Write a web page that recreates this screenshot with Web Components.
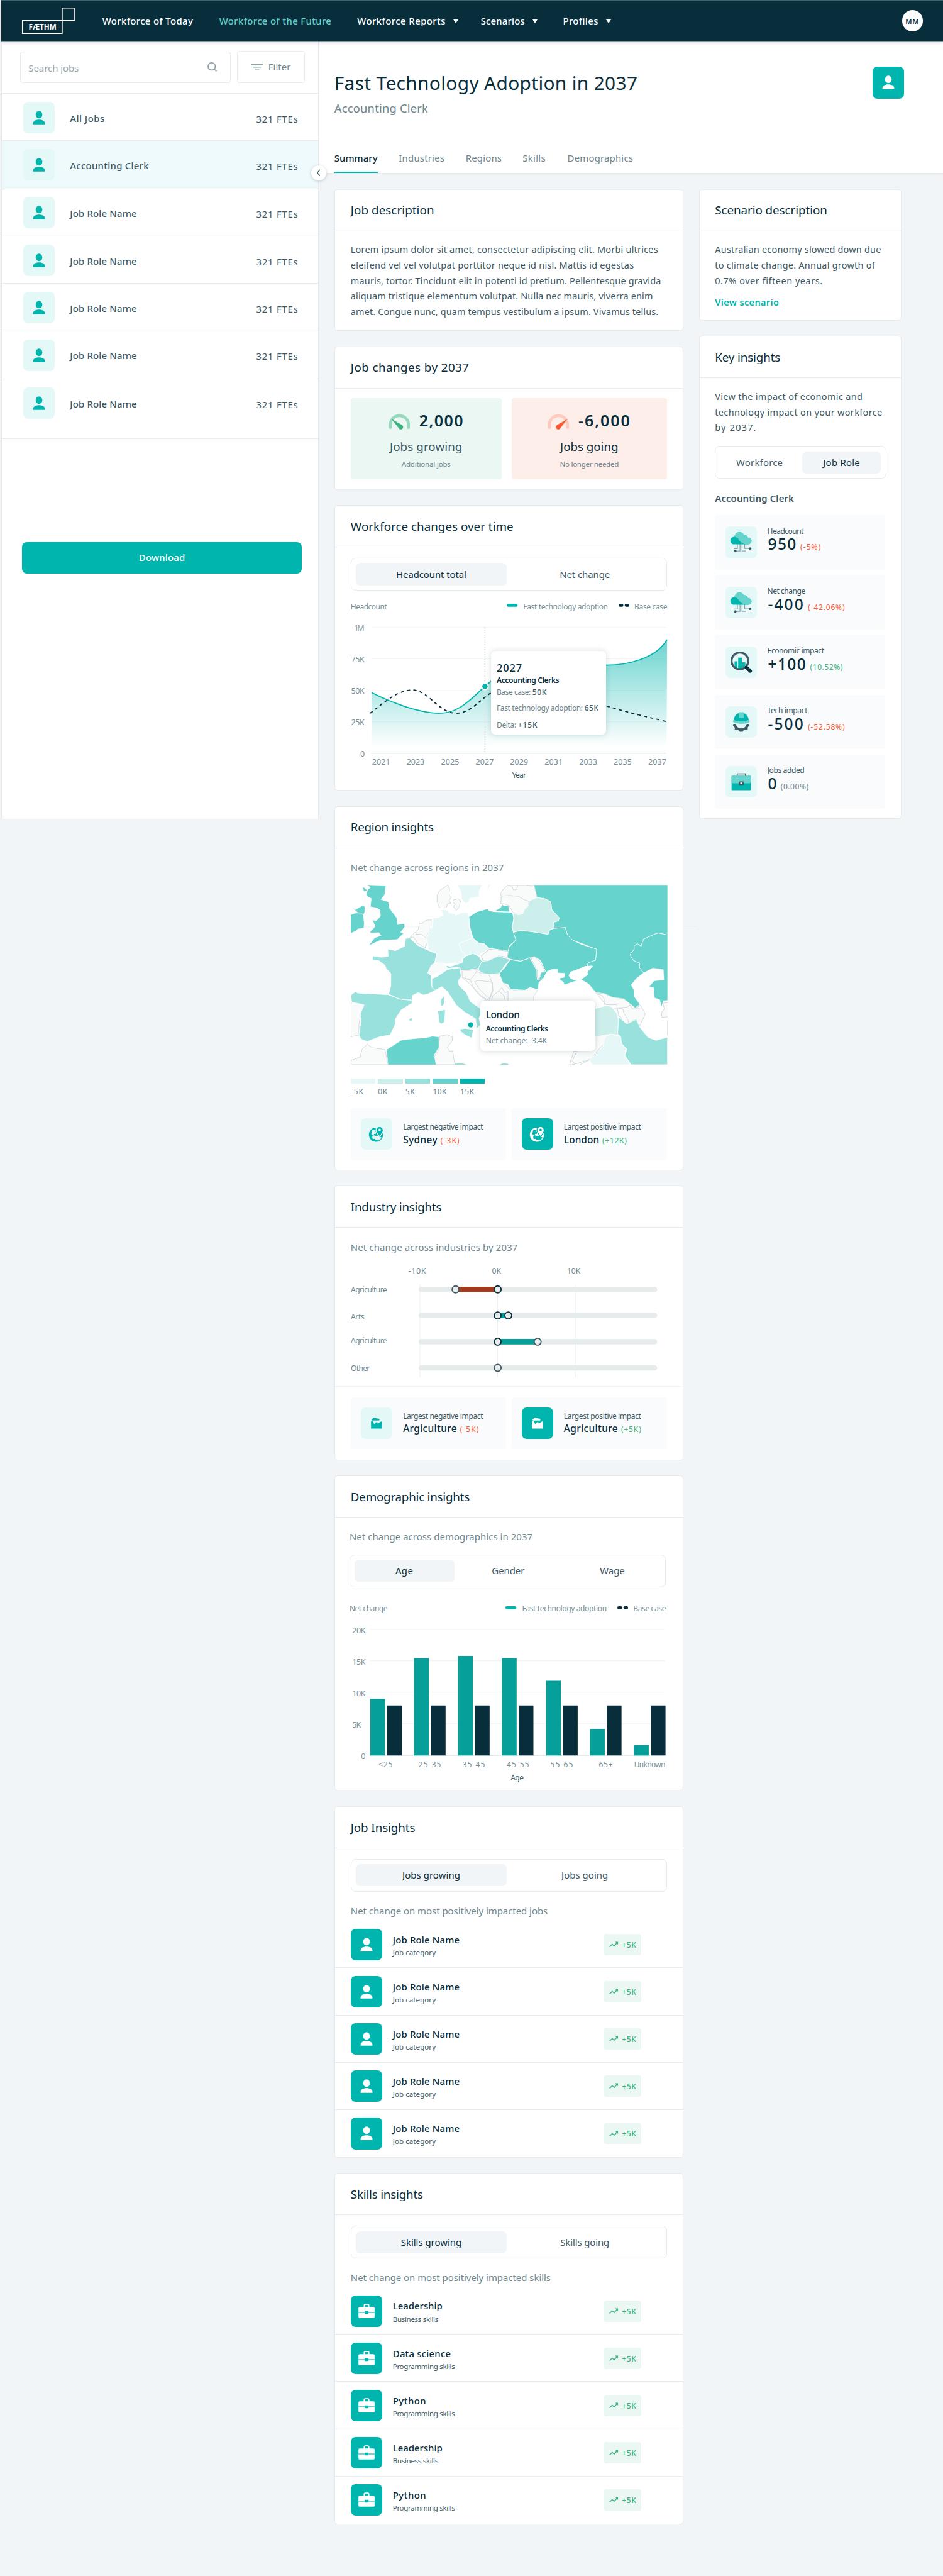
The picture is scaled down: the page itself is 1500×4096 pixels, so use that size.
<!DOCTYPE html>
<html lang="en">
<head>
<meta charset="utf-8">
<title>Workforce of the Future</title>
<style>
html{background:#f1f5f8;overflow:hidden}
body{margin:0;font-family:"Noto Sans",sans-serif;color:#082d3b}
</style>
</head>
<body>
<workforce-app></workforce-app>
<script>
const INK='#082d3b', BODY='#3c5863', MUTED='#6e868d', TEAL='#00b5ad', LINE='#e6ebec', GREEN='#3bb381', RED='#ff5b36';
const FACE='"Noto Sans"';
const pen=document.createElement('canvas').getContext('2d');

class Base extends HTMLElement{
  connectedCallback(){
    if(this.shadowRoot)return;
    this.attachShadow({mode:'open'}).innerHTML='<style>:host{display:block;box-sizing:border-box}*{box-sizing:border-box}svg{display:block}'+this.css()+'</style>'+this.html();
  }
  css(){return ''}
  html(){return '<slot></slot>'}
  a(n,d=''){return this.getAttribute(n)??d}
}
const def=(n,c)=>customElements.define(n,c);

/* A single line of text tracked to a given measure. */
class TextLine extends Base{
  css(){
    const s=+this.a('s',16),wt=this.a('wt','400'),w=+this.a('w',0),t=this.textContent.trim();
    pen.font=`${wt} ${s}px ${FACE}`;
    const m=pen.measureText(t).width;
    const ls=w?(w+1-m)/t.length:0;
    return `:host{white-space:nowrap;flex:none;font-size:${s}px;font-weight:${wt};color:${this.a('c',INK)};line-height:${this.a('lh',24)}px;letter-spacing:${ls.toFixed(3)}px;${w?`width:${w+1}px`:''}}`;
  }
}
def('text-line',TextLine);
const T=(t,w,s=16,c=INK,o={})=>`<text-line w="${w}" s="${s}" c="${c}" wt="${o.wt||400}" lh="${o.lh||24}" style="${o.st||''}">${t}</text-line>`;
const ST=(t,x,y,w,c=MUTED,s=12.5,wt=400)=>`<text x="${x}" y="${y}" textLength="${w}" fill="${c}" font-size="${s}" font-weight="${wt}">${t}</text>`;

const ICONS={
 person:f=>`<ellipse cx="26" cy="21" rx="5.5" ry="6.2" fill="${f}"/><path d="M16.2 37v-1.4c0-4 4-6.3 9.8-6.3s9.8 2.3 9.8 6.3V37z" fill="${f}"/>`,
 case:(f,b)=>`<path d="M22.3 19.5v-3.2c0-1 .6-1.6 1.6-1.6h4.2c1 0 1.6.6 1.6 1.6v3.2" fill="none" stroke="${f}" stroke-width="2"/><rect x="12.7" y="19" width="26.6" height="18.2" rx="2" fill="${f}"/><path d="M12.7 28h26.6" stroke="${b}" stroke-width="1.2"/><rect x="22.8" y="25.6" width="6.4" height="4.8" rx=".8" fill="${b}"/>`,
 globe:(f,b)=>`<circle cx="25" cy="27.3" r="11.7" fill="${f}"/><path d="M18.300 20.300l2.500-1.300 3.200.6-.4 2.300 1.800 1.300-.6 2.400-3 .4-.6 2.200 3.600.9 3.800-.2 2.200 2.100 3 .2-1.600 4.400-3.600 1.300-2.200-1.500-1.800.8-1.400-2.200-3.600.6-.8-3.600.9-2.600-2.600-2.400.9-2.500z" fill="${b}"/><path d="M31 30.300c-4-4.700-6-7.500-6-10.500a6 6 0 0 1 12 0c0 3-1.800 5.800-6 10.500z" fill="${f}" stroke="${b}" stroke-width="1.400"/><circle cx="31" cy="19.300" r="2.100" fill="${b}"/>`,
 factory:f=>`<path d="M16.800 22.700h3.200l1.900 4.900 5.200-4.400v3.400l7.700-4v12.200h-18z" fill="${f}"/><path d="M18.300 21.500c-1.200-1.500-.2-3.200 1.300-3.200.8-1.600 3-1.900 4.300-.7 1.200-.3 1.900 0 2.600.8 1.500-.6 3.500-.1 4.200 1.200.3 1-.3 1.900-1.400 1.900z" fill="${f}"/>`,
 cloud:()=>`<path d="M19.700 29v7.600h-8M24 29v11.500h-8M27.400 29v11.500h8M31.700 29v7.500h8" fill="none" stroke="#8ba2a8" stroke-width="1.300"/><circle cx="11.500" cy="36.500" r="2" fill="#fff"/><circle cx="35.500" cy="40.600" r="2" fill="#fff"/><circle cx="16.200" cy="40.700" r="2" fill="${BODY}"/><circle cx="40.700" cy="36.500" r="2" fill="${BODY}"/><path d="M14 29.500c-3.500 0-6-2.800-6-6 0-3.600 3-6.400 6.700-6C15.500 12.300 19 9.300 23 9.300c3.400 0 6 1.800 7.300 4.700 3.500-.5 5.900 1.300 6.600 4.300 3.500.1 6.100 2.500 6.100 5.500 0 3.300-2.500 5.700-6 5.700z" fill="${TEAL}"/><path d="M14.700 17.500C15.500 12.300 19 9.300 23 9.300c3.400 0 6 1.800 7.300 4.700 3.500-.5 5.900 1.300 6.600 4.300 3.500.1 6.100 2.500 6.100 5.500 0 3.300-2.500 5.700-6 5.700-10 0-13-4.500-15.500-8.500-1.700-2.300-4-3.400-6.800-3.500z" fill="#66d3cd"/>`,
 lens:()=>`<path d="M15 33V24.500h4.700V37H15zM21 18.500h6V38h-6zM27.800 25.800h5V34l-5 3z" fill="${TEAL}"/><circle cx="23.800" cy="23.800" r="13.800" fill="none" stroke="#3f5a65" stroke-width="3.400"/><path d="M34.500 34.500l6.500 6" stroke="${INK}" stroke-width="5.500" stroke-linecap="round"/>`,
 helmet:()=>`<path d="M13 29h4c.8 4.700 4.500 7.500 9 7.500s8.200-2.800 9-7.500h4l.8 3-2.300 1.800-1 2.200.5 2-3 1.500-2-.5-2.700 1.300-.7 1.700h-5.200l-.7-1.700-2.700-1.300-2 .5-3-1.500.5-2-1-2.200-2.300-1.800z" fill="#3f5a65"/><path d="M13.500 25C13.500 16 19 10.500 26 10.500S38.500 16 38.500 25z" fill="${TEAL}"/><path d="M22.500 9.800h7.600l.8 9h-9.200z" fill="#66d3cd"/><path d="M12 24.500c0-1.500 2-2 3-1.500 7 2.400 15 2.400 22 0 1-.5 3 0 3 1.500 0 3.500-6 4.500-14 4.500s-14-1-14-4.500z" fill="#66d3cd"/>`,
 brief:()=>`<path d="M19.300 17v-4h13.600v4" fill="none" stroke="#3f5a65" stroke-width="1.500"/><rect x="10" y="16" width="32" height="24" rx="1.300" fill="${TEAL}"/><path d="M10 17.300c0-.8.5-1.300 1.300-1.300h29.400c.8 0 1.300.5 1.300 1.300V26c0 1.500-1 2.500-2.500 2.500h-27c-1.500 0-2.500-1-2.500-2.500z" fill="#66d3cd"/><rect x="22" y="25.500" width="8" height="6" rx=".8" fill="#3f5a65"/><rect x="24.500" y="27.200" width="3" height="2.400" fill="#fff"/>`
};
class IconTile extends Base{
  css(){return `:host{width:52px;height:52px;flex:none;border-radius:8px;background:${this.hasAttribute('solid')?TEAL:'#e5f8f8'}}`}
  html(){const s=this.hasAttribute('solid');return `<svg width="52" height="52" viewBox="0 0 52 52">${ICONS[this.a('icon')](s?'#fff':TEAL,s?TEAL:'#e5f8f8')}</svg>`}
}
def('icon-tile',IconTile);

class TopNav extends Base{
  css(){return `:host{height:69px;background:${INK};margin-left:2px;display:flex;align-items:center;border-top:1px solid #456470;border-bottom:1px solid #7f979e;box-shadow:0 2px 6px rgba(8,45,59,.16);z-index:3;position:relative}
  .logo{margin:0 0 0 33px;width:92px;height:46px;flex:none}.nav{display:flex;margin-left:42px;align-items:center;padding-top:1px}
  i{width:0;border:4.700px solid transparent;border-top:7px solid #fff;border-bottom:0;margin-left:12.500px}
  .me{margin-left:auto;margin-right:33px;width:35px;height:35px;border-radius:50%;background:#fff;display:flex;justify-content:center;align-items:center}`}
  html(){const n=(t,w,mr,c='#fff',car=0)=>T(t,w,15.5,c,{wt:500})+(car?'<i></i>':'')+`<span style="width:${mr}px"></span>`;
  return `<svg class="logo" viewBox="35 11 92 46"><path d="M36.800 33.500h65.600v21.300H36.800zM102.400 12.900h20.800v20.600h-20.800z" fill="none" stroke="#fff" stroke-width="1.600"/><text x="47" y="48.700" textLength="46" lengthAdjust="spacingAndGlyphs" font-size="12.500" font-weight="700" fill="#fff">FÆTHM</text></svg>
  <div class="nav">${n('Workforce of Today',149,43)}${n('Workforce of the Future',184.5,42.500,'#5fd3cb')}${n('Workforce Reports',145,37,'#fff',1)}${n('Scenarios',72,42,'#fff',1)}${n('Profiles',57.500,0,'#fff',1)}</div>
  <div class="me">${T('MM',22,11.5,INK,{wt:600})}</div>`}
}
def('top-nav',TopNav);

class JobRow extends Base{
  css(){return `:host{height:${this.a('h',78.6)}px;border-bottom:1px solid ${LINE};padding:13px 33px 0 35px;display:flex;${this.hasAttribute('on')?'background:#effafc;':''}}
  .n{margin:15.500px 0 0 25.500px}.f{margin:16.500px 0 0 auto}`}
  html(){return `<icon-tile icon="person"></icon-tile><div class="n">${T(this.a('name'),this.a('w'),15.5,BODY,{wt:500})}</div><div class="f">${T('321 FTEs',68.5,15.5,BODY)}</div>`}
}
def('job-row',JobRow);

class SideBar extends Base{
  css(){return `:host{width:524.500px;margin-left:2px;height:1282px;background:#fff;border-right:1px solid ${LINE};border-left:1px solid ${LINE};position:relative;flex:none}
  .top{height:86px;border-bottom:1px solid ${LINE};padding:15.500px 0 0 30px;display:flex;gap:10px}
  .in{width:348px;height:52px;margin-top:1px;border:1px solid ${LINE};border-radius:4px;display:flex;align-items:center;padding:3px 20px 0 13px;justify-content:space-between}
  .fl{width:112px;height:53px;border:1px solid ${LINE};border-radius:4px;display:flex;align-items:center;padding:0 0 0 23px;gap:9px}
  .dl{margin:170px 27px 0 33.500px;height:52px;border-radius:8px;background:${TEAL};display:flex;justify-content:center;align-items:center}
  .tg{position:absolute;right:-13px;top:204px;width:25px;height:25px;border-radius:50%;background:#fff;box-shadow:0 1px 6px rgba(8,45,59,.22);display:flex;justify-content:center;align-items:center}`}
  html(){const r=(n,w,x='')=>`<job-row name="${n}" w="${w}" ${x}></job-row>`;
  return `<div class="top"><div class="in">${T('Search jobs',82,15.5,'#98a8ad')}<svg width="18" height="18" viewBox="0 0 18 18" style="margin-top:-5px"><circle cx="8" cy="8" r="6" fill="none" stroke="#8b9fa5" stroke-width="1.800"/><path d="M12.300 12.300L16 16" stroke="#8b9fa5" stroke-width="2"/></svg></div>
  <div class="fl"><svg width="19" height="12" viewBox="0 0 19 12"><path d="M0 1.500h19M3 6h13M6 10.500h7" stroke="#8b9fa5" stroke-width="1.500"/></svg>${T('Filter',36,15.5,MUTED)}</div></div>
  ${r('All Jobs',56.5,'h="78"')}${r('Accounting Clerk',129.5,'on h="79"')}${r('Job Role Name',109.5,'h="78.500"')}${r('Job Role Name',109.5,'h="78"')}${r('Job Role Name',109.5)}${r('Job Role Name',109.5,'h="79"')}${r('Job Role Name',109.5,'h="98.600"')}
  <div class="dl">${T('Download',75.5,15.5,'#fff',{wt:500})}</div>
  <div class="tg"><svg width="8" height="12" viewBox="0 0 8 12"><path d="M6 1L1.800 6 6 11" fill="none" stroke="${BODY}" stroke-width="1.500"/></svg></div>`}
}
def('side-bar',SideBar);

class PageHead extends Base{
  css(){return `:host{height:217.500px;background:#fff;border-bottom:1px solid ${LINE};padding:41.500px 64px 0 25.500px;display:flex;flex-direction:column}
  .r{display:flex;justify-content:space-between}.tabs{display:flex;margin-top:auto}
  .tabs>div{height:36px;border-bottom:3px solid transparent;margin-right:36px}.tabs>.on{border-color:${TEAL}}`}
  html(){const t=(n,w,mr,on)=>`<div class="${on?'on':''}" style="margin-right:${mr}px">${T(n,w,15.5,on?INK:MUTED,{wt:on?500:400})}</div>`;
  return `<div class="r"><div>${T('Fast Technology Adoption in 2037',500,31,INK,{lh:53})}${T('Accounting Clerk',154,19,MUTED,{lh:28,st:'margin-top:2px'})}</div><icon-tile icon="person" solid></icon-tile></div>
  <div class="tabs">${t('Summary',70.5,35,1)}${t('Industries',74.5,35)}${t('Regions',58.5,34.500)}${t('Skills',37,36)}${t('Demographics',107.5,0)}</div>`}
}
def('page-head',PageHead);

class UiCard extends Base{
  css(){return `:host{background:#fff;border:1px solid ${LINE};border-radius:5px;height:${this.a('h')}px}
  header{height:68.500px;border-bottom:1px solid ${LINE};padding:20.500px 25.500px 0}.b{padding:0 25.500px}`}
  html(){return `<header>${T(this.a('head'),this.a('w'),19.5,INK,{lh:28})}</header><div class="b"><slot></slot></div>`}
}
def('ui-card',UiCard);

/* opts: "label:textWidth:segmentWidth|…", on: selected index */
class SegToggle extends Base{
  css(){return `:host{height:54px;border:1px solid ${LINE};border-radius:8px;padding:8px 7px;display:flex;gap:${this.a('gap',0)}px}
  div{height:36.500px;border-radius:7px;display:flex;align-items:center;justify-content:center;flex:none}.on{background:#f1f5f8}`}
  html(){return this.a('opts').split('|').map((o,i)=>{const [t,w,sw]=o.split(':'),on=i==this.a('on',0);return `<div class="${on?'on':''}" style="width:${sw}px">${T(t,+w,15.5,on?INK:BODY)}</div>`}).join('')}
}
def('seg-toggle',SegToggle);

class GaugeTile extends Base{
  css(){const g=this.hasAttribute('good');return `:host{width:${g?249:257}px;height:134px;border-radius:4px;background:${g?'#eaf7f2':'#feeeea'};display:flex;flex-direction:column;align-items:center;padding-top:22px}
  .r{display:flex;gap:15px}svg{margin-top:4px}`}
  html(){const g=this.hasAttribute('good'),[a,b]=g?['#97d9bc',GREEN]:['#ffcbc0','#ff5730'];
  return `<div class="r"><svg width="36" height="26" viewBox="0 0 36 26"><path d="M3 22.500V18a15 15 0 0 1 30 0v4.500" fill="none" stroke="${a}" stroke-width="5" stroke-linecap="round"/><path ${g?'':'transform="matrix(-1 0 0 1 38 0)"'} d="M4.800 8.200L22.300 18.500a3.900 3.900 0 1 1-5.600 4.800z" fill="${b}"/></svg>${T(this.a('v'),this.a('vw'),26,INK,{wt:600,lh:31,st:'margin-bottom:-1px'})}</div>
  ${T(this.a('t'),this.a('tw'),19.5,g?BODY:INK,{lh:28,st:'margin-top:14.500px'})}${T(this.a('n'),this.a('nw'),12,MUTED,{lh:18,st:'margin-top:5px'})}`}
}
def('gauge-tile',GaugeTile);

class ChartLegend extends Base{
  css(){return `:host{display:flex;align-items:center;height:18px}`}
  html(){return T(this.a('axis'),this.a('w'),12.5,'#7a8f96',{lh:18})+`<span style="flex:1"></span><svg width="18" height="5" viewBox="0 0 18 5" style="margin:-3px 9px 0 0"><path d="M2.400 2.500h13.200" stroke="${TEAL}" stroke-width="4.800" stroke-linecap="round"/></svg>${T('Fast technology adoption',138.5,12.5,'#7a8f96',{lh:18})}<svg width="18" height="5" viewBox="0 0 18 5" style="margin:-3px 8px 0 18px"><path d="M2.400 2.500h3M12.400 2.500h3" stroke="${INK}" stroke-width="4.800" stroke-linecap="round"/></svg>${T('Base case',53,12.5,'#7a8f96',{lh:18})}`}
}
def('chart-legend',ChartLegend);

class TipBox extends Base{
  css(){return `:host{position:absolute;background:#fff;border-radius:7px;box-shadow:0 1px 10px rgba(8,45,59,.17);display:flex;flex-direction:column}::slotted(div){display:flex;gap:3px}`}
}
def('tip-box',TipBox);

class LineChart extends Base{
  css(){return `:host{position:relative;height:275px}svg{overflow:visible}`}
  html(){
    const ys=[1034.3,1086.3,1138.3,1190,1242],yl=[['1M',585,17],['75K',580,22],['50K',580,22],['25K',580,22],['0',595,7]];
    let g='';
    ys.forEach((y,i)=>{g+=`<path d="M613.500 ${y}H1100" stroke="${i==4?'#e3eaeb':'#f1f4f5'}" stroke-width="${i==4?1.600:1}"/>`+ST(yl[i][0],yl[i][1],y+5.6,yl[i][2],'#7a8f96',13)});
    for(let i=0;i<9;i++)g+=ST(2021+2*i,614.5+57*i,1261.3,30,'#7a8f96',13);
    g+=ST('Year',846,1283,23,BODY,12.5);
    const c='M193 966C260 1005 390 1068 485 1068C570 1068 620 1000 682 935C750 860 850 832 1000 832L1207 830C1290 830 1420 800 1468 703';
    return `<svg width="524" height="275" viewBox="579.500 1015 524 275"><defs><linearGradient id="g" x1="0" y1="0" x2="0" y2="1"><stop offset="0" stop-color="${TEAL}" stop-opacity=".58"/><stop offset=".95" stop-color="${TEAL}" stop-opacity="0"/></linearGradient></defs>${g}
    <g transform="translate(540 820) scale(.38265 .33333)"><path d="${c}L1466 1265H193Z" fill="url(#g)"/></g>
    <path d="M801 1034V1242" stroke="#dfe4e6" stroke-width="2" stroke-dasharray="2 2"/>
    <g transform="translate(540 820) scale(.38265 .33333)" fill="none"><path d="${c}" stroke="${TEAL}" stroke-width="5.300"/><path d="M187 1068C250 1010 310 953 368 953C440 953 480 1068 560 1068C620 1068 660 1000 711 965M1207 1032C1290 1062 1380 1085 1464 1109" stroke="${INK}" stroke-width="5.600" stroke-dasharray="14 14"/></g>
    <circle cx="801" cy="1131.500" r="5.500" fill="${TEAL}" stroke="#fff" stroke-width="2"/></svg>
    <tip-box style="left:232px;top:58px;width:190px;height:138px;padding:16.500px 0 0 9px">${T('2027',41.5,17,INK,{wt:500})}${T('Accounting Clerks',102,12.5,INK,{wt:600,lh:18,st:'margin-top:-1px'})}
    <div style="margin-top:2px">${T('Base case:',55,12.5,MUTED,{lh:18})}${T('50K',23,12.5,BODY,{wt:500,lh:18})}</div>
    <div style="margin-top:8px">${T('Fast technology adoption:',141,12.5,MUTED,{lh:18})}${T('65K',23,12.5,BODY,{wt:500,lh:18})}</div>
    <div style="margin-top:10px">${T('Delta:',31,12.5,MUTED,{lh:18})}${T('+15K',32,12.5,BODY,{wt:500,lh:18})}</div></tip-box>`}
}
def('line-chart',LineChart);

class RegionMap extends Base{
  css(){return `:host{position:relative;height:297px;width:523px}`}
  html(){
    const A='#66d3cd',B='#99e1dd',C='#ccefec',D='#e5f7f6',N='#f9fbfb';
    const p=(f,d,s='#fff',w=3)=>`<path d="${d}" fill="${f}" stroke="${s}" stroke-width="${w}" stroke-linejoin="round"/>`;
    const G='#d0d6da';
    return `<svg width="523" height="297" viewBox="26 27 1519 890" preserveAspectRatio="none"><rect x="26" y="27" width="1519" height="890" fill="#fff"/><path d="M26 235H420" stroke="#f0f3f4" stroke-width="3"/>
    ${p(N,'M452 55L492 27L500 45L497 75L508 88L498 104L505 118L488 122L485 138L474 141L452 140L440 110L440 80ZM516 102L540 96L553 105L546 135L532 153L518 135L528 122L516 116Z',G)}
    ${p(N,'M745 120L748 85L743 70L760 45L780 27H905L920 90L880 107L878 130L858 150L852 168L832 175L805 165L785 130L765 122ZM750 82Q790 76 830 84Q860 104 880 107M783 27L800 36L806 52L822 50L826 27M870 27L898 34',G)}
    ${p(N,'M412 200Q375 200 368 220L355 216L350 248L310 285L330 288L345 315L385 340L388 320L400 315L392 275L410 245ZM335 272L365 270L388 292M383 340L388 320',G)}
    ${p(N,'M412 425L475 415L490 440L520 438L495 462L480 455L465 474L445 460L430 468L412 475L395 462Z','#fff')}
    ${p(N,'M560 485L630 455L655 465L705 468L740 465L755 510L785 540L820 550L860 548L885 535L925 545L903 580V620H700L640 570L600 520Z',G)}
    ${p(N,'M560 450H600L635 442L620 470L600 495L560 485ZM576 490L600 500L615 535L650 575L688 600M620 505L640 500L705 508V550L690 590L640 540ZM690 472L705 520L708 550L690 600M708 575L735 552L765 578L760 600H700ZM735 552L750 535L765 560L780 555V600',G)}
    ${p(N,'M1200 560L1245 566L1280 582L1335 590L1395 635L1415 622L1438 665L1410 730L1395 690L1350 715L1315 690L1300 620L1250 620L1225 590ZM1200 565Q1250 570 1244 620M1285 640L1330 640L1310 635L1350 632L1365 620L1375 640L1412 640M1285 640L1290 665L1320 680L1335 710L1358 712L1355 695L1335 660L1330 640',G)}
    ${p(N,'M1190 780L1280 762L1250 800L1175 890L1090 917H1075L1095 850L1190 840ZM1110 850L1090 895L1100 915M1170 893L1125 917M1088 900L1078 890',G)}
    ${p(N,'M26 610L45 605L90 620L75 660L65 720V770L26 778ZM26 895L70 880L80 840L105 815L130 832L190 842L205 917H26ZM452 775L490 768L514 780L512 800L488 830L500 850L514 848L522 900L530 917H430L425 880L448 840Z',G)}
    <path d="M1545 610L1522 612L1530 640L1516 660L1518 682L1545 680M1545 700V770" fill="${N}" stroke="${G}" stroke-width="3"/>
    ${p(A,'M905 27L920 90L955 95L985 110L990 150L1025 190L1022 205L998 212L1002 242L1055 238L1065 275L1090 300L1130 315L1205 345L1200 400L1165 410L1158 430L1185 430L1160 455L1162 470L1130 495L1165 515L1200 557L1245 565L1280 582L1335 590L1390 635L1412 618L1385 580L1383 545L1370 522L1395 490L1430 462L1475 438L1525 446L1528 497L1480 502L1458 530L1478 535L1482 585L1508 595L1516 630L1525 600L1545 598V27Z','#fff',1)}
    ${p(D,'M536 27L555 60L558 95L575 118L590 112L596 92L640 85L640 60L655 27ZM680 55L695 27H685Z','#fff',1)}
    ${p(A,'M106 27L120 40L108 50L100 72L108 85L125 95L120 140L160 142L168 165L130 200L145 230L118 265L160 262L172 278L140 290L115 325L160 302L200 298L250 296L278 265L262 262L285 230L280 220L250 225L245 190L210 142L205 112L170 100L188 75L194 30ZM82 40L90 60L105 55L90 40ZM35 140L50 150L65 140L85 128L103 140V155L90 170L70 172L55 160ZM26 175L45 168L65 165L85 172L90 215L88 240L60 245L50 255L26 266Z','#fff',1)}
    <path d="M92 100L125 95L128 140L165 148L170 180L150 205L112 208L92 180" fill="#fdfefe"/>
    <path d="M170 101L125 98L120 141L150 142L172 150L168 205L132 203L145 235L118 260L165 262L173 278L145 290L115 325L165 300L245 296L278 268L262 264L285 232L280 220L250 225L245 190L210 142L205 112Z" fill="${A}"/>
    <path d="M88 130L125 135L150 140L168 155L166 185L148 205L132 200L112 206L92 195L90 165L104 150Z" fill="#fcfdfd"/>
    ${p(D,'M420 192L440 190L468 178L460 150L492 152L495 166L522 168L528 178L555 165L585 163L595 195L592 230L608 290L545 318L555 350L580 370L560 395L558 412L480 418L428 412L438 370L398 345L392 290L400 262L415 240Z')}
    ${p(A,'M592 185L630 160L680 145L690 155L718 160L800 162L808 190L800 235L818 300L785 330L782 355L690 340L665 318L640 316L612 290L598 240Z')}
    ${p(A,'M718 155L745 140L752 125L765 132L782 128L785 160Z','#fff',1)}
    ${p(C,'M805 168L832 175L852 168L858 150L878 130L882 105L920 90L955 95L985 110L990 150L1025 190L1022 205L998 212L1002 242L980 250L972 272L925 265L905 260L840 252L806 262L800 235L808 200Z')}
    ${p(A,'M806 262L840 252L905 260L972 272L980 250L1002 242L1055 238L1065 275L1090 300L1130 320L1205 345L1200 400L1165 412L1158 430L1120 442L1080 462L1080 490L1128 495L1090 508L1050 522L1045 508L1020 490L1050 482L1052 465L1015 462L1018 445L990 445L965 458L948 495L920 495L935 480L935 460L960 455L935 400L905 382L885 388L840 405L790 395L776 385L785 335L818 300Z')}
    ${p('#fff','M1072 475L1080 458L1120 445L1150 430L1185 428L1158 460L1162 470L1130 495L1095 496L1078 485Z')}
    ${p(D,'M545 318L608 290L640 316L665 318L690 345L652 365L640 378L612 366L580 376L555 350Z')}
    ${p(N,'M652 378L690 345L782 355L776 385L735 378L685 402L660 402Z',G,3.500)}
    ${p(B,'M478 425L505 430L560 412L562 395L580 378L612 366L640 380L655 405L640 440L595 448L555 450L540 435L490 440Z')}
    ${p(B,'M640 435L655 405L685 402L735 378L790 397L765 425L738 465L690 470L660 465L638 450Z')}
    ${p(A,'M790 397L840 405L885 388L918 450L920 495L950 490L928 510L925 545L885 535L860 548L790 543L780 520L755 512L738 465L765 435Z')}
    ${p(N,'M888 386L908 382L935 410L958 455L940 460L930 492L918 485L920 450Z',G)}
    ${p(B,'M288 292L310 290L345 325L385 345L438 368L428 412L395 462L412 475L415 530L432 548L400 565L375 572L350 560L320 575L320 597L262 592L207 568L218 525L218 465L195 440L190 425L160 402L130 402V378L175 385L205 380L203 345L240 352L285 330Z')}
    ${p(N,'M412 425L430 414L475 415L490 440L520 438L495 462L480 455L465 474L445 460L430 468L412 475L395 462Z','#fff')}
    ${p(B,'M26 572L48 555L60 562L205 570L262 592L320 598V612L268 645L240 690L240 715L215 770L165 778L105 802L75 790L65 768L75 700L72 665L90 620L30 608Z')}
    ${p(B,'M415 490L440 480L490 445L550 437L555 482L542 500L545 525L580 560L600 605L650 640V670L640 685L648 720L628 738L625 690L570 655L530 620L490 555L462 530L432 548L415 535Z')}
    <path d="M462 590L473 580L472 615L463 628L456 605ZM445 652L478 645L474 705L460 714L450 705ZM552 742L575 738L612 745L605 783L575 768L552 750ZM305 692L320 684V698L310 700ZM526 910L560 910L582 917H526ZM740 917Q762 900 788 917Z" fill="${B}"/>
    ${p(A,'M198 842L270 795L330 788L390 783L418 776L448 780L448 830L425 870L435 917H205Z','#fff',1)}
    ${p(C,'M1190 642L1245 625L1275 628L1300 660L1312 700L1306 770L1270 765L1190 782Z')}
    ${p(D,'M1172 893L1235 825L1245 780L1275 765L1318 778L1325 815L1345 835L1340 870L1365 917H1182Z')}
    ${p(B,'M1310 680L1350 715L1395 692L1412 730L1450 780L1490 796L1545 780V917H1370L1340 870L1350 840L1325 812L1320 778L1306 765Z')}
    <path d="M1545 275L1500 265L1480 272L1430 295L1418 330L1400 318L1385 328L1385 345L1365 372L1380 400L1412 415L1410 435L1430 462" fill="none" stroke="#fff" stroke-width="3"/>
    <path d="M950 490L970 455L1015 445V462L1050 467L1050 485L1022 490L1050 522L1090 508L1128 498L1165 518L1200 560L1230 600L1190 640H903V580L926 545L928 515Z" fill="#fff"/>
    </svg>
    <svg width="20" height="20" viewBox="0 0 20 20" style="position:absolute;left:188px;top:222px;overflow:visible"><circle cx="10" cy="10" r="7.500" fill="#082d3b" opacity=".06"/><circle cx="10" cy="10" r="5.300" fill="${TEAL}" stroke="#fff" stroke-width="2"/></svg>
    <tip-box style="left:214px;top:191px;width:190px;height:84px;padding:11.500px 0 0 9px">${T('London',55,16,INK,{wt:500})}${T('Accounting Clerks',102,12.5,INK,{wt:600,lh:18,st:'margin-top:2px'})}${T('Net change: −3.4K'.replace('−','-'),100,12.5,MUTED,{lh:18,st:'margin-top:2.500px'})}</tip-box>`}
}
def('region-map',RegionMap);

class MapScale extends Base{
  css(){return `:host{display:flex;gap:4.200px}i{display:block;width:41px;height:8px;margin-bottom:4.500px}`}
  html(){return [['-5K',21,'#e5f7f6'],['0K',15,'#ccefec'],['5K',15,'#99e1dd'],['10K',22.500,'#66d3cd'],['15K',22.500,TEAL]].map(([t,w,c])=>`<div><i style="background:${c}"></i>${T(t,w,12.5,MUTED,{lh:18})}</div>`).join('')}
}
def('map-scale',MapScale);

class ImpactTile extends Base{
  css(){return `:host{width:257px;height:86px;border-radius:4px;background:#f9fbfc;padding:17px;display:flex;gap:17.500px}div{padding-top:5px}.r{display:flex;gap:5px;padding:0;margin-top:0}`}
  html(){const g=this.hasAttribute('good');return `<icon-tile icon="${this.a('icon')}" ${g?'solid':''}></icon-tile><div>${T(`Largest ${g?'positive':'negative'} impact`,g?126.5:131,12.5,BODY,{lh:18})}<div class="r">${T(this.a('t'),this.a('w'),16,INK,{wt:500})}${T(this.a('d'),this.a('dw'),12.5,g?GREEN:RED,{lh:26})}</div></div>`}
}
def('impact-tile',ImpactTile);

class IndustryChart extends Base{
  css(){return `svg{overflow:visible}`}
  html(){
    let s=ST('-10K',674.5,2101,29)+ST('0K',812.5,2101,15)+ST('10K',936.5,2101,22);
    for(const x of [693.5,822,950.3])s+=`<path d="M${x} 2118V2272" stroke="#eef1f2" stroke-width="1.200"/>`;
    const rows=[['Agriculture',60,2132,2127,752.5,822,'#9e3a1d'],['Arts',22.5,2176.5,2170,822,839.5,'#079f9a'],['Agriculture',60,2215.5,2213.3,822,888,'#079f9a'],['Other',31.5,2261.5,2256.5,822,822,'']];
    rows.forEach(([t,w,by,y,x1,x2,c],i)=>{s+=ST(t,579.5,by,w)+`<rect x="691.500" y="${y-4.5}" width="394" height="9" rx="4.500" fill="#e6ebec"/>`;
      if(c)s+=`<path d="M${x1} ${y}H${x2}" stroke="${c}" stroke-width="9"/>`;
      const k=(x,q)=>`<circle cx="${x}" cy="${y}" r="5.700" fill="#eaedee" stroke="${q}" stroke-width="1.900"/>`;
      s+=k(x2,i>1?'#3f5a65':INK); if(i<3)s+=k(x1,i?INK:'#3f5a65')});
    return `<svg width="524" height="208" viewBox="579.500 2080 524 208">${s}<path d="M550.500 2287.500H1126" stroke="${LINE}"/></svg>`}
}
def('industry-chart',IndustryChart);

class BarChart extends Base{
  css(){return `svg{overflow:visible}`}
  html(){
    let s='';const ys=[2687.6,2739.2,2791.2,2843.3,2895.5];
    [['20K',582,22],['15K',582,22],['10K',582,22],['5K',582,14.500],['0',596.500,7]].forEach(([t,x,w],i)=>{s+=`<path d="M611.500 ${ys[i]}H1098" stroke="${i==4?'#e3eaeb':'#f1f4f5'}" stroke-width="${i==4?1.600:1.200}"/>`+ST(t,x,ys[i]+6.2,w,'#7a8f96',13)});
    const X=[611.6,683.9,756.6,828.9,902,974.4,1047],Y=[2802.2,2735,2731.3,2735,2772.3,2851.8,2878.4];
    X.forEach((x,i)=>{s+=`<path d="M${x} 2895.600V${Y[i]}h24.500V2895.600z" fill="#079f9a"/><path d="M${x+27.9} 2895.600V2813h24.300V2895.600z" fill="${INK}"/>`});
    [['&lt;25',625.5,23],['25-35',691.5,37],['35-45',764,37],['45-55',837,37],['55-65',909,37.500],['65+',989,23],['Unknown',1047.5,51.500]].forEach(([t,x,w])=>s+=ST(t,x,2915,w,'#7a8f96',12.5));
    return `<svg width="524" height="275" viewBox="577.500 2670 524 275">${s}${ST('Age',843.5,2937,21.5,BODY)}</svg>`}
}
def('bar-chart',BarChart);

class RankRow extends Base{
  css(){return `:host{height:78px;margin:0 -25.500px;padding:0 68px 0 25.500px;display:flex;border-bottom:1px solid ${LINE}}:host([last]){border:0}
  icon-tile{margin:13px 17.500px 0 0}.t{padding-top:19px}.g{margin:21.500px 0 0 auto;width:63px;height:35px;border-radius:4px;background:#eaf7f2;display:flex;align-items:center;padding-left:10px;gap:6px}`}
  html(){return `<icon-tile icon="${this.a('icon')}" solid></icon-tile><div class="t">${T(this.a('t'),this.a('w'),15.5,INK,{wt:500})}${T(this.a('n'),this.a('nw'),12,BODY,{lh:18})}</div>
  <div class="g"><svg width="15" height="10" viewBox="0 0 15 10"><path d="M.7 8.800L5 4.600 8.300 7.400 13.700 1.500" fill="none" stroke="${GREEN}" stroke-width="1.600"/><path d="M9.800.4h4.800v4.800z" fill="${GREEN}"/></svg>${T('+5K',23,12.5,GREEN,{wt:500,lh:18,st:'margin-top:1px'})}</div>`}
}
def('rank-row',RankRow);

class MetricBox extends Base{
  css(){return `:host{width:281px;height:90px;border-radius:4px;background:#f9fbfc;padding:19px 17px;display:flex;gap:17.500px;margin-bottom:8.750px}.r{display:flex;gap:5.500px;margin:-3px 0 0 1px}`}
  html(){const d=this.a('d');return `<icon-tile icon="${this.a('icon')}"></icon-tile><div>${T(this.a('t'),this.a('w'),12.5,BODY,{lh:18,st:'margin-top:-1.500px'})}<div class="r">${T(this.a('v'),this.a('vw'),25.5,INK,{wt:500,lh:32})}${T(d,this.a('dw'),12.5,this.a('c'),{lh:41})}</div></div>`}
}
def('metric-box',MetricBox);

class WorkforceApp extends Base{
  css(){return `:host{zoom:.96339;width:1557px;height:4252px;background:#f1f5f8;overflow:hidden;position:relative}
  .m{display:flex}.p{flex:1}.c{display:flex;gap:26px;padding:25.500px 0 0 26px;align-items:flex-start}
  .l,.k{display:flex;flex-direction:column;gap:25.500px}.l{width:575.500px}.k{width:335px}.two{display:flex;justify-content:space-between}
  .stray{height:1px;background:#e9eef0;width:22px;position:absolute}`}
  html(){
    const lines=(a)=>a.map(([t,w])=>T(t,w,15,BODY,{lh:25.6})).join('');
    const sub=(t,w,mt)=>T(t,w,15.5,MUTED,{st:`margin-top:${mt}px`});
    const job='<rank-row icon="person" t="Job Role Name" w="109.500" n="Job category" nw="70"></rank-row>';
    const sk=(t,w,n,nw,l='')=>`<rank-row icon="case" t="${t}" w="${w}" n="${n}" nw="${nw}" ${l}></rank-row>`;
    const mb=(i,t,w,v,vw,d,dw,c)=>`<metric-box icon="${i}" t="${t}" w="${w}" v="${v}" vw="${vw}" d="${d}" dw="${dw}" c="${c}"></metric-box>`;
    return `<top-nav></top-nav><div class="m"><side-bar></side-bar><div class="p"><page-head></page-head><div class="c">
    <div class="l">
    <ui-card head="Job description" w="137" h="234"><div style="padding-top:18.500px">${lines([['Lorem ipsum dolor sit amet, consectetur adipiscing elit. Morbi ultrices',507],['eleifend vel vel volutpat porttitor neque id nisl. Mattis id egestas',467],['mauris, tortor. Tincidunt elit in potenti id pretium. Pellentesque gravida',512],['aliquam tristique elementum volutpat. Nulla nec mauris, viverra enim',498.5],['amet. Congue nunc, quam tempus vestibulum a ipsum. Vivamus tellus.',507.5]])}</div></ui-card>
    <ui-card head="Job changes by 2037" w="195" h="237"><div class="two" style="margin-top:16px"><gauge-tile good v="2,000" vw="73" t="Jobs growing" tw="119" n="Additional jobs" nw="80"></gauge-tile><gauge-tile v="-6,000" vw="86" t="Jobs going" tw="95" n="No longer needed" nw="96"></gauge-tile></div></ui-card>
    <ui-card head="Workforce changes over time" w="268" h="471"><seg-toggle style="margin-top:17px" opts="Headcount total:115:250|Net change:82:257"></seg-toggle><chart-legend axis="Headcount" w="58.500" style="margin-top:17.500px"></chart-legend><line-chart style="margin-top:6.500px"></line-chart></ui-card>
    <ui-card head="Region insights" w="136" h="601">${sub('Net change across regions in 2037',252,19.5)}<region-map style="margin-top:16.500px"></region-map><map-scale style="margin-top:23.500px"></map-scale><div class="two" style="margin-top:18px"><impact-tile icon="globe" t="Sydney" w="56" d="(-3K)" dw="31"></impact-tile><impact-tile good icon="globe" t="London" w="57.500" d="(+12K)" dw="40"></impact-tile></div></ui-card>
    <ui-card head="Industry insights" w="149" h="453">${sub('Net change across industries by 2037',275,20)}<industry-chart style="margin-top:10.500px"></industry-chart><div class="two" style="margin-top:17px"><impact-tile icon="factory" t="Argiculture" w="88" d="(-5K)" dw="31"></impact-tile><impact-tile good icon="factory" t="Agriculture" w="88.500" d="(+5K)" dw="33"></impact-tile></div></ui-card>
    <ui-card head="Demographic insights" w="195.500" h="520"><div style="margin:0 2px 0 -2px">${sub('Net change across demographics in 2037',301.5,19.5)}<seg-toggle style="margin-top:17px" opts="Age:28.500:165|Gender:53:178|Wage:40:166"></seg-toggle><chart-legend axis="Net change" w="61.500" style="margin-top:26.500px"></chart-legend><bar-chart style="margin-top:7.500px"></bar-chart></div></ui-card>
    <ui-card head="Job Insights" w="105.500" h="580"><seg-toggle style="margin-top:17.500px" opts="Jobs growing:94.500:250|Jobs going:76:257"></seg-toggle>${sub('Net change on most positively impacted jobs',324.5,20)}<div style="height:4.500px"></div>${job.repeat(4)}${job.replace('icon','last icon')}</ui-card>
    <ui-card head="Skills insights" w="118.500" h="580"><seg-toggle style="margin-top:17.500px" opts="Skills growing:99:250|Skills going:80:257"></seg-toggle>${sub('Net change on most positively impacted skills',329.5,19.500)}<div style="height:4.500px"></div>${sk('Leadership',81,'Business skills',74)}${sk('Data science',95,'Programming skills',101.5)}${sk('Python',54.5,'Programming skills',101.5)}${sk('Leadership',81,'Business skills',74)}${sk('Python',54.5,'Programming skills',101.5,'last')}</ui-card>
    </div>
    <div class="k">
    <ui-card head="Scenario description" w="184.500" h="217"><div style="padding-top:18.500px">${lines([['Australian economy slowed down due',273.5],['to climate change. Annual growth of',263.5],['0.7% over fifteen years.',177]])}${T('View scenario',105,15,TEAL,{wt:600,st:'margin-top:10.500px'})}</div></ui-card>
    <ui-card head="Key insights" w="107" h="797.500"><div style="padding-top:18.500px">${lines([['View the impact of economic and',243],['technology impact on your workforce',275.5],['by 2037.',68]])}</div><seg-toggle style="margin-top:17px;width:283px" gap="5" on="1" opts="Workforce:76:131|Job Role:60:130"></seg-toggle>${T('Accounting Clerk',129.5,15.5,BODY,{wt:600,st:'margin:20px 0 16px'})}
    ${mb('cloud','Headcount',58.5,'950',47,'(-5%)',33.5,RED)}${mb('cloud','Net change',61.5,'-400',59.5,'(-42.06%)',60.5,RED)}${mb('lens','Economic impact',92.5,'+100',63,'(10.52%)',53.5,GREEN)}${mb('helmet','Tech impact',65,'-500',59.5,'(-52.58%)',60.5,RED)}${mb('brief','Jobs added',60,'0',14.5,'(0.00%)',45.5,MUTED)}</ui-card>
    </div></div></div></div>
    <div class="stray" style="left:1129px;top:1528px"></div>`}
}
def('workforce-app',WorkforceApp);
</script>
</body>
</html>
